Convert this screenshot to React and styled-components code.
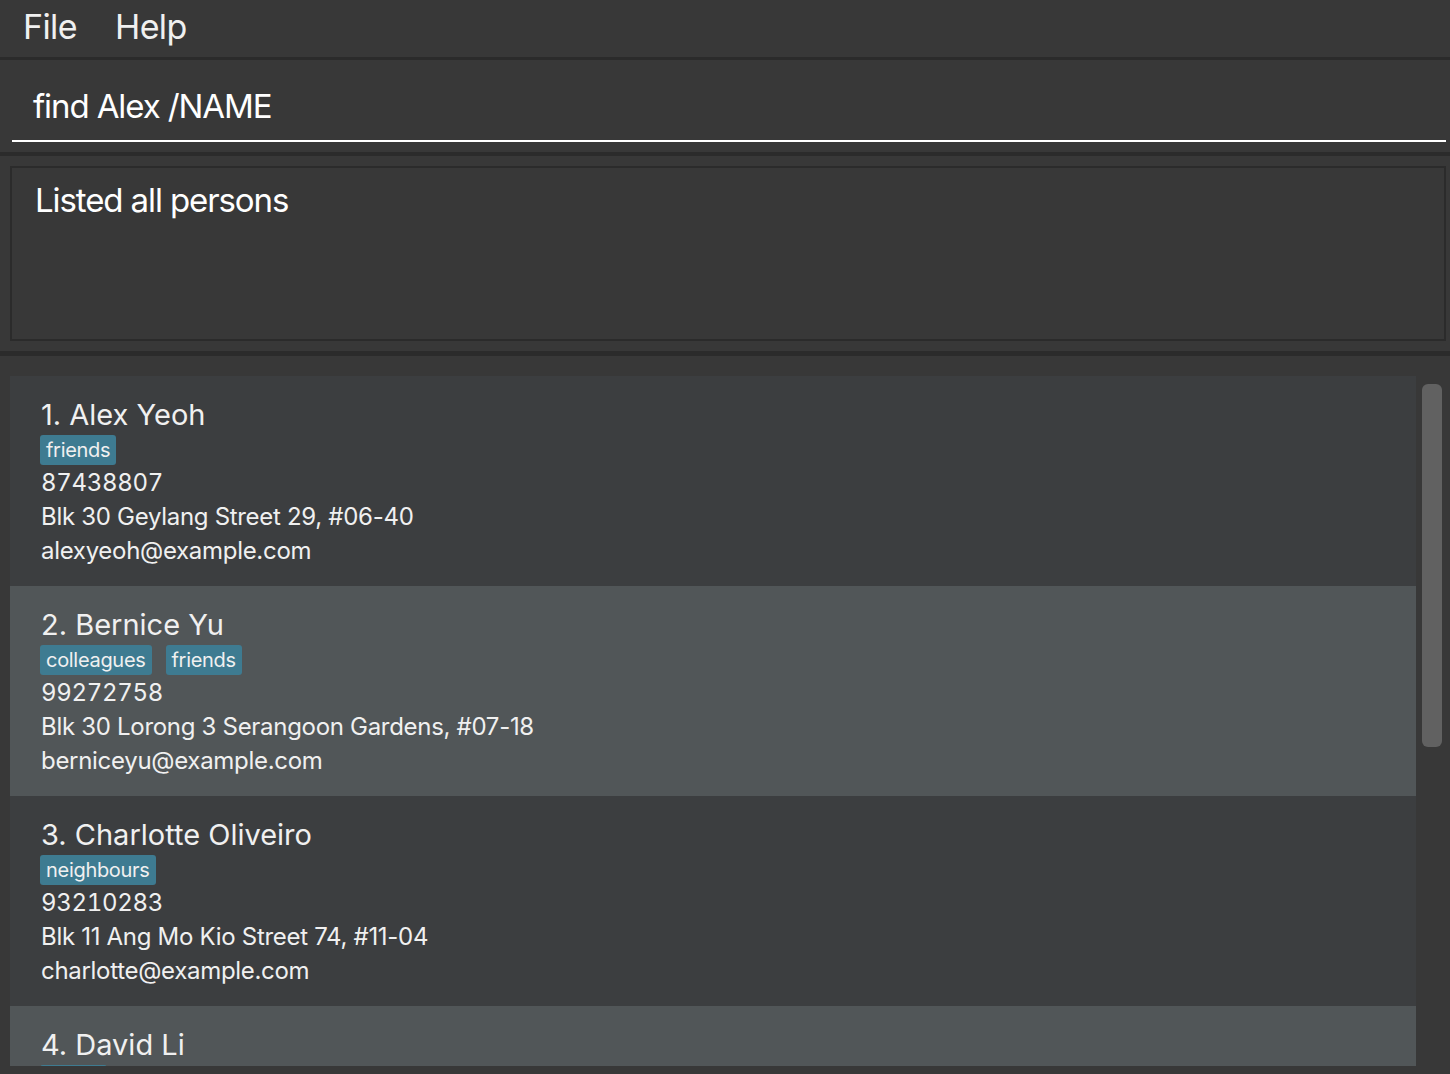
import React from "react";
import styled, { createGlobalStyle } from "styled-components";

const GlobalStyle = createGlobalStyle`
  html, body {
    margin: 0;
    padding: 0;
    background: #383838;
    font-family: Inter, "Open Sans", sans-serif;
    overflow: hidden;
  }
`;

const Window = styled.div`
  width: 1450px;
  height: 1074px;
  background: #383838;
  display: flex;
  flex-direction: column;
  color: #ffffff;
`;

const MenuBar = styled.div`
  height: 57px;
  display: flex;
  align-items: center;
  gap: 38px;
  padding-left: 23px;
  border-bottom: 3px solid #2b2b2b;
`;

const MenuItem = styled.div`
  font-size: 34px;
  letter-spacing: -0.6px;
  color: #f0f0f0;
  margin-top: -4px;
`;

const CommandSection = styled.div`
  padding: 0 4px 10px 12px;
  border-bottom: 4px solid #2b2b2b;
`;

const CommandInput = styled.div`
  height: 82px;
  display: flex;
  align-items: flex-end;
  padding: 0 0 14px 21px;
  box-sizing: border-box;
  font-size: 33px;
  letter-spacing: -1.1px;
  border-bottom: 2px solid #ffffff;
`;

const ResultSection = styled.div`
  padding: 10px 4px 10px 10px;
  border-bottom: 5px solid #2b2b2b;
`;

const ResultBox = styled.div`
  height: 175px;
  box-sizing: border-box;
  border: 2px solid #2b2b2b;
  padding: 12px 23px;
  font-size: 33px;
  letter-spacing: -1.1px;
`;

const ListSection = styled.div`
  display: flex;
  padding: 20px 8px 0 10px;
  gap: 6px;
  height: 690px;
`;

const List = styled.div`
  flex: 1;
  display: flex;
  flex-direction: column;
  overflow: hidden;
`;

const Card = styled.div`
  flex: 0 0 210px;
  box-sizing: border-box;
  padding: 21px 30px 0 31px;
  background: ${(p) => (p.$alt ? "#515658" : "#3c3e40")};
  display: flex;
  flex-direction: column;
`;

const Name = styled.div`
  font-size: 29px;
  line-height: 36px;
  color: #f0f0f0;
`;

const Tags = styled.div`
  display: flex;
  gap: 14px;
  margin: 2px 0 1px -1px;
`;

const Tag = styled.span`
  background: #3e7b91;
  border-radius: 3px;
  height: 30px;
  padding: 0 6px;
  font-size: 20px;
  letter-spacing: -0.3px;
  line-height: 30px;
  color: #f0f0f0;
`;

const Detail = styled.div`
  font-size: 24px;
  letter-spacing: -0.3px;
  line-height: 34px;
  font-variant-numeric: ${(p) => (p.$numeric ? "tabular-nums" : "normal")};
  color: #f0f0f0;
`;

const ScrollTrack = styled.div`
  width: 20px;
  padding-top: 8px;
`;

const ScrollThumb = styled.div`
  height: 363px;
  background: #616161;
  border-radius: 6px;
`;

const persons = [
  {
    name: "Alex Yeoh",
    tags: ["friends"],
    phone: "87438807",
    address: "Blk 30 Geylang Street 29, #06-40",
    email: "alexyeoh@example.com",
  },
  {
    name: "Bernice Yu",
    tags: ["colleagues", "friends"],
    phone: "99272758",
    address: "Blk 30 Lorong 3 Serangoon Gardens, #07-18",
    email: "berniceyu@example.com",
  },
  {
    name: "Charlotte Oliveiro",
    tags: ["neighbours"],
    phone: "93210283",
    address: "Blk 11 Ang Mo Kio Street 74, #11-04",
    email: "charlotte@example.com",
  },
  {
    name: "David Li",
    tags: ["family"],
    phone: "91031282",
    address: "Blk 436 Serangoon Gardens Street 26, #16-43",
    email: "lidavid@example.com",
  },
];

export default function App() {
  return (
    <Window>
      <GlobalStyle />
      <MenuBar>
        <MenuItem>File</MenuItem>
        <MenuItem>Help</MenuItem>
      </MenuBar>
      <CommandSection>
        <CommandInput>find Alex /NAME</CommandInput>
      </CommandSection>
      <ResultSection>
        <ResultBox>Listed all persons</ResultBox>
      </ResultSection>
      <ListSection>
        <List>
          {persons.map((p, i) => (
            <Card key={p.name} $alt={i % 2 === 1}>
              <Name>
                {i + 1}. {p.name}
              </Name>
              <Tags>
                {p.tags.map((t) => (
                  <Tag key={t}>{t}</Tag>
                ))}
              </Tags>
              <Detail $numeric>{p.phone}</Detail>
              <Detail>{p.address}</Detail>
              <Detail>{p.email}</Detail>
            </Card>
          ))}
        </List>
        <ScrollTrack>
          <ScrollThumb />
        </ScrollTrack>
      </ListSection>
    </Window>
  );
}
